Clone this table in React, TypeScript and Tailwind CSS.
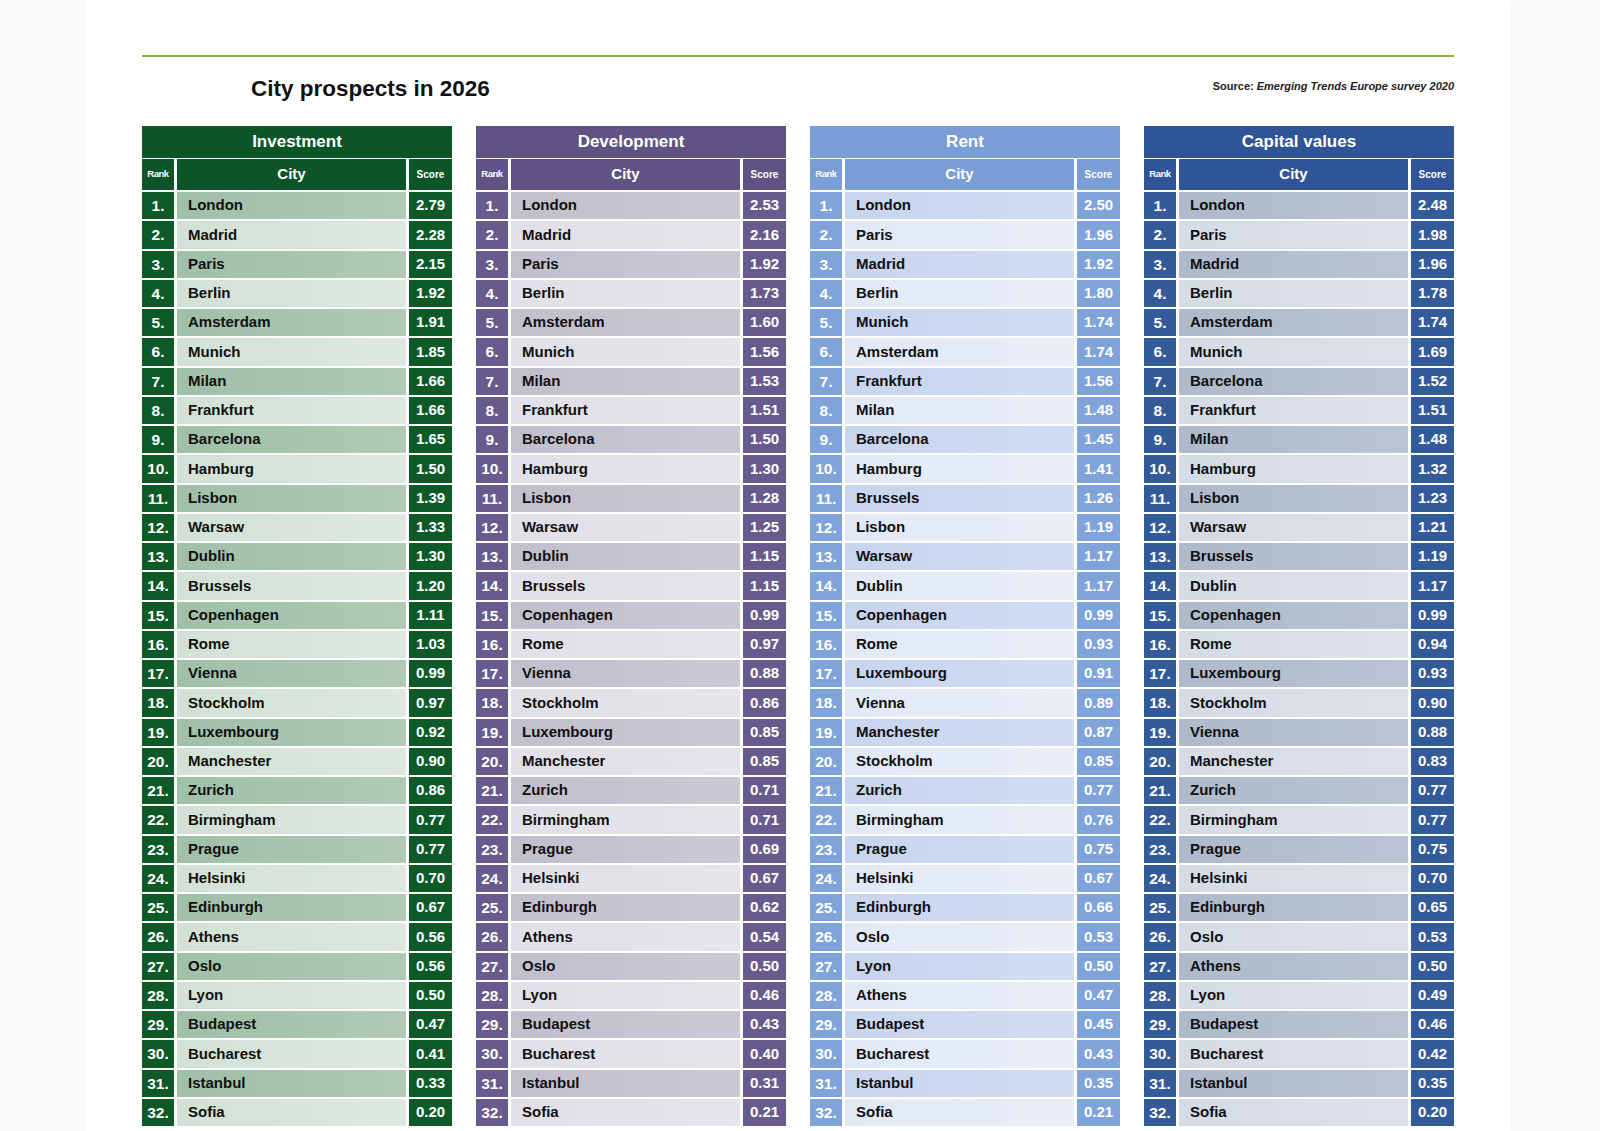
type Row = [string, string];

const investment: Row[] = [
  ["London", "2.79"], ["Madrid", "2.28"], ["Paris", "2.15"], ["Berlin", "1.92"],
  ["Amsterdam", "1.91"], ["Munich", "1.85"], ["Milan", "1.66"], ["Frankfurt", "1.66"],
  ["Barcelona", "1.65"], ["Hamburg", "1.50"], ["Lisbon", "1.39"], ["Warsaw", "1.33"],
  ["Dublin", "1.30"], ["Brussels", "1.20"], ["Copenhagen", "1.11"], ["Rome", "1.03"],
  ["Vienna", "0.99"], ["Stockholm", "0.97"], ["Luxembourg", "0.92"], ["Manchester", "0.90"],
  ["Zurich", "0.86"], ["Birmingham", "0.77"], ["Prague", "0.77"], ["Helsinki", "0.70"],
  ["Edinburgh", "0.67"], ["Athens", "0.56"], ["Oslo", "0.56"], ["Lyon", "0.50"],
  ["Budapest", "0.47"], ["Bucharest", "0.41"], ["Istanbul", "0.33"], ["Sofia", "0.20"],
];

const development: Row[] = [
  ["London", "2.53"], ["Madrid", "2.16"], ["Paris", "1.92"], ["Berlin", "1.73"],
  ["Amsterdam", "1.60"], ["Munich", "1.56"], ["Milan", "1.53"], ["Frankfurt", "1.51"],
  ["Barcelona", "1.50"], ["Hamburg", "1.30"], ["Lisbon", "1.28"], ["Warsaw", "1.25"],
  ["Dublin", "1.15"], ["Brussels", "1.15"], ["Copenhagen", "0.99"], ["Rome", "0.97"],
  ["Vienna", "0.88"], ["Stockholm", "0.86"], ["Luxembourg", "0.85"], ["Manchester", "0.85"],
  ["Zurich", "0.71"], ["Birmingham", "0.71"], ["Prague", "0.69"], ["Helsinki", "0.67"],
  ["Edinburgh", "0.62"], ["Athens", "0.54"], ["Oslo", "0.50"], ["Lyon", "0.46"],
  ["Budapest", "0.43"], ["Bucharest", "0.40"], ["Istanbul", "0.31"], ["Sofia", "0.21"],
];

const rent: Row[] = [
  ["London", "2.50"], ["Paris", "1.96"], ["Madrid", "1.92"], ["Berlin", "1.80"],
  ["Munich", "1.74"], ["Amsterdam", "1.74"], ["Frankfurt", "1.56"], ["Milan", "1.48"],
  ["Barcelona", "1.45"], ["Hamburg", "1.41"], ["Brussels", "1.26"], ["Lisbon", "1.19"],
  ["Warsaw", "1.17"], ["Dublin", "1.17"], ["Copenhagen", "0.99"], ["Rome", "0.93"],
  ["Luxembourg", "0.91"], ["Vienna", "0.89"], ["Manchester", "0.87"], ["Stockholm", "0.85"],
  ["Zurich", "0.77"], ["Birmingham", "0.76"], ["Prague", "0.75"], ["Helsinki", "0.67"],
  ["Edinburgh", "0.66"], ["Oslo", "0.53"], ["Lyon", "0.50"], ["Athens", "0.47"],
  ["Budapest", "0.45"], ["Bucharest", "0.43"], ["Istanbul", "0.35"], ["Sofia", "0.21"],
];

const capital: Row[] = [
  ["London", "2.48"], ["Paris", "1.98"], ["Madrid", "1.96"], ["Berlin", "1.78"],
  ["Amsterdam", "1.74"], ["Munich", "1.69"], ["Barcelona", "1.52"], ["Frankfurt", "1.51"],
  ["Milan", "1.48"], ["Hamburg", "1.32"], ["Lisbon", "1.23"], ["Warsaw", "1.21"],
  ["Brussels", "1.19"], ["Dublin", "1.17"], ["Copenhagen", "0.99"], ["Rome", "0.94"],
  ["Luxembourg", "0.93"], ["Stockholm", "0.90"], ["Vienna", "0.88"], ["Manchester", "0.83"],
  ["Zurich", "0.77"], ["Birmingham", "0.77"], ["Prague", "0.75"], ["Helsinki", "0.70"],
  ["Edinburgh", "0.65"], ["Oslo", "0.53"], ["Athens", "0.50"], ["Lyon", "0.49"],
  ["Budapest", "0.46"], ["Bucharest", "0.42"], ["Istanbul", "0.35"], ["Sofia", "0.20"],
];

const tables = [
  {
    title: "Investment",
    rows: investment,
    head: "bg-[#0c5526]",
    cell: "bg-[#0d5a28]",
    dark: "bg-gradient-to-r from-[#a0bfa8] to-[#b0cab6]",
    light: "bg-gradient-to-r from-[#d2e1d5] to-[#dee8e0]",
  },
  {
    title: "Development",
    rows: development,
    head: "bg-[#5f5383]",
    cell: "bg-[#675b8e]",
    dark: "bg-gradient-to-r from-[#c2bfcd] to-[#ccc9d5]",
    light: "bg-gradient-to-r from-[#e1dfe7] to-[#e8e6ec]",
  },
  {
    title: "Rent",
    rows: rent,
    head: "bg-[#7a9ed5]",
    cell: "bg-[#80a3d9]",
    dark: "bg-gradient-to-r from-[#c8d5ee] to-[#d0dcf1]",
    light: "bg-gradient-to-r from-[#e2e9f6] to-[#e9eef8]",
  },
  {
    title: "Capital values",
    rows: capital,
    head: "bg-[#2f5596]",
    cell: "bg-[#335a99]",
    dark: "bg-gradient-to-r from-[#aeb9cb] to-[#bac4d3]",
    light: "bg-gradient-to-r from-[#d5dbe5] to-[#dde2ea]",
  },
];

function CityTable({ t }: { t: (typeof tables)[number] }) {
  return (
    <div className="w-[310px] flex flex-col">
      <div className={`${t.head} h-[31.5px] flex items-center justify-center text-white font-bold text-[17px]`}>
        {t.title}
      </div>
      <div className="grid grid-cols-[32px_1fr_43px] gap-x-[3px] mt-[1.5px]">
        <div className={`${t.head} h-[31px] flex items-center justify-center text-white font-bold text-[9.5px] tracking-tighter`}>
          Rank
        </div>
        <div className={`${t.head} h-[31px] flex items-center justify-center text-white font-bold text-[15px]`}>
          City
        </div>
        <div className={`${t.head} h-[31px] flex items-center justify-center text-white font-bold text-[10px]`}>
          Score
        </div>
      </div>
      <div className="flex flex-col gap-y-[2px] mt-[2px]">
        {t.rows.map(([city, score], i) => (
          <div key={i} className="grid grid-cols-[32px_1fr_43px] gap-x-[3px] h-[27.25px]">
            <div className={`${t.cell} flex items-center justify-center text-white font-bold text-[15.5px]`}>
              {i + 1}.
            </div>
            <div className={`${i % 2 === 0 ? t.dark : t.light} flex items-center pl-[11px] text-[#111] font-bold text-[15px]`}>
              {city}
            </div>
            <div className={`${t.cell} flex items-center justify-center text-white font-bold text-[15px]`}>
              {score}
            </div>
          </div>
        ))}
      </div>
    </div>
  );
}

export default function App() {
  return (
    <div className="w-[1600px] h-[1131px] bg-[#fafafa] overflow-hidden" style={{ fontFamily: '"Liberation Sans", Arial, sans-serif' }}>
      <div className="ml-[85px] w-[1426px] h-full bg-white shadow-[0_0_6px_rgba(0,0,0,0.03)]">
        <div className="ml-[57px] w-[1312px] pt-[55px]">
          <div className="h-[2px] bg-[#8cb43e]" />
          <div className="flex items-start justify-between mt-[18px] h-[51px]">
            <h1 className="ml-[109px] text-[22.5px] font-bold text-[#111] leading-[28px]">City prospects in 2026</h1>
            <div className="mt-[3px] text-[11px] font-bold text-[#222]">
              Source: <span className="italic">Emerging Trends Europe survey 2020</span>
            </div>
          </div>
          <div className="flex gap-x-[24px]">
            {tables.map((t) => (
              <CityTable key={t.title} t={t} />
            ))}
          </div>
        </div>
      </div>
    </div>
  );
}
